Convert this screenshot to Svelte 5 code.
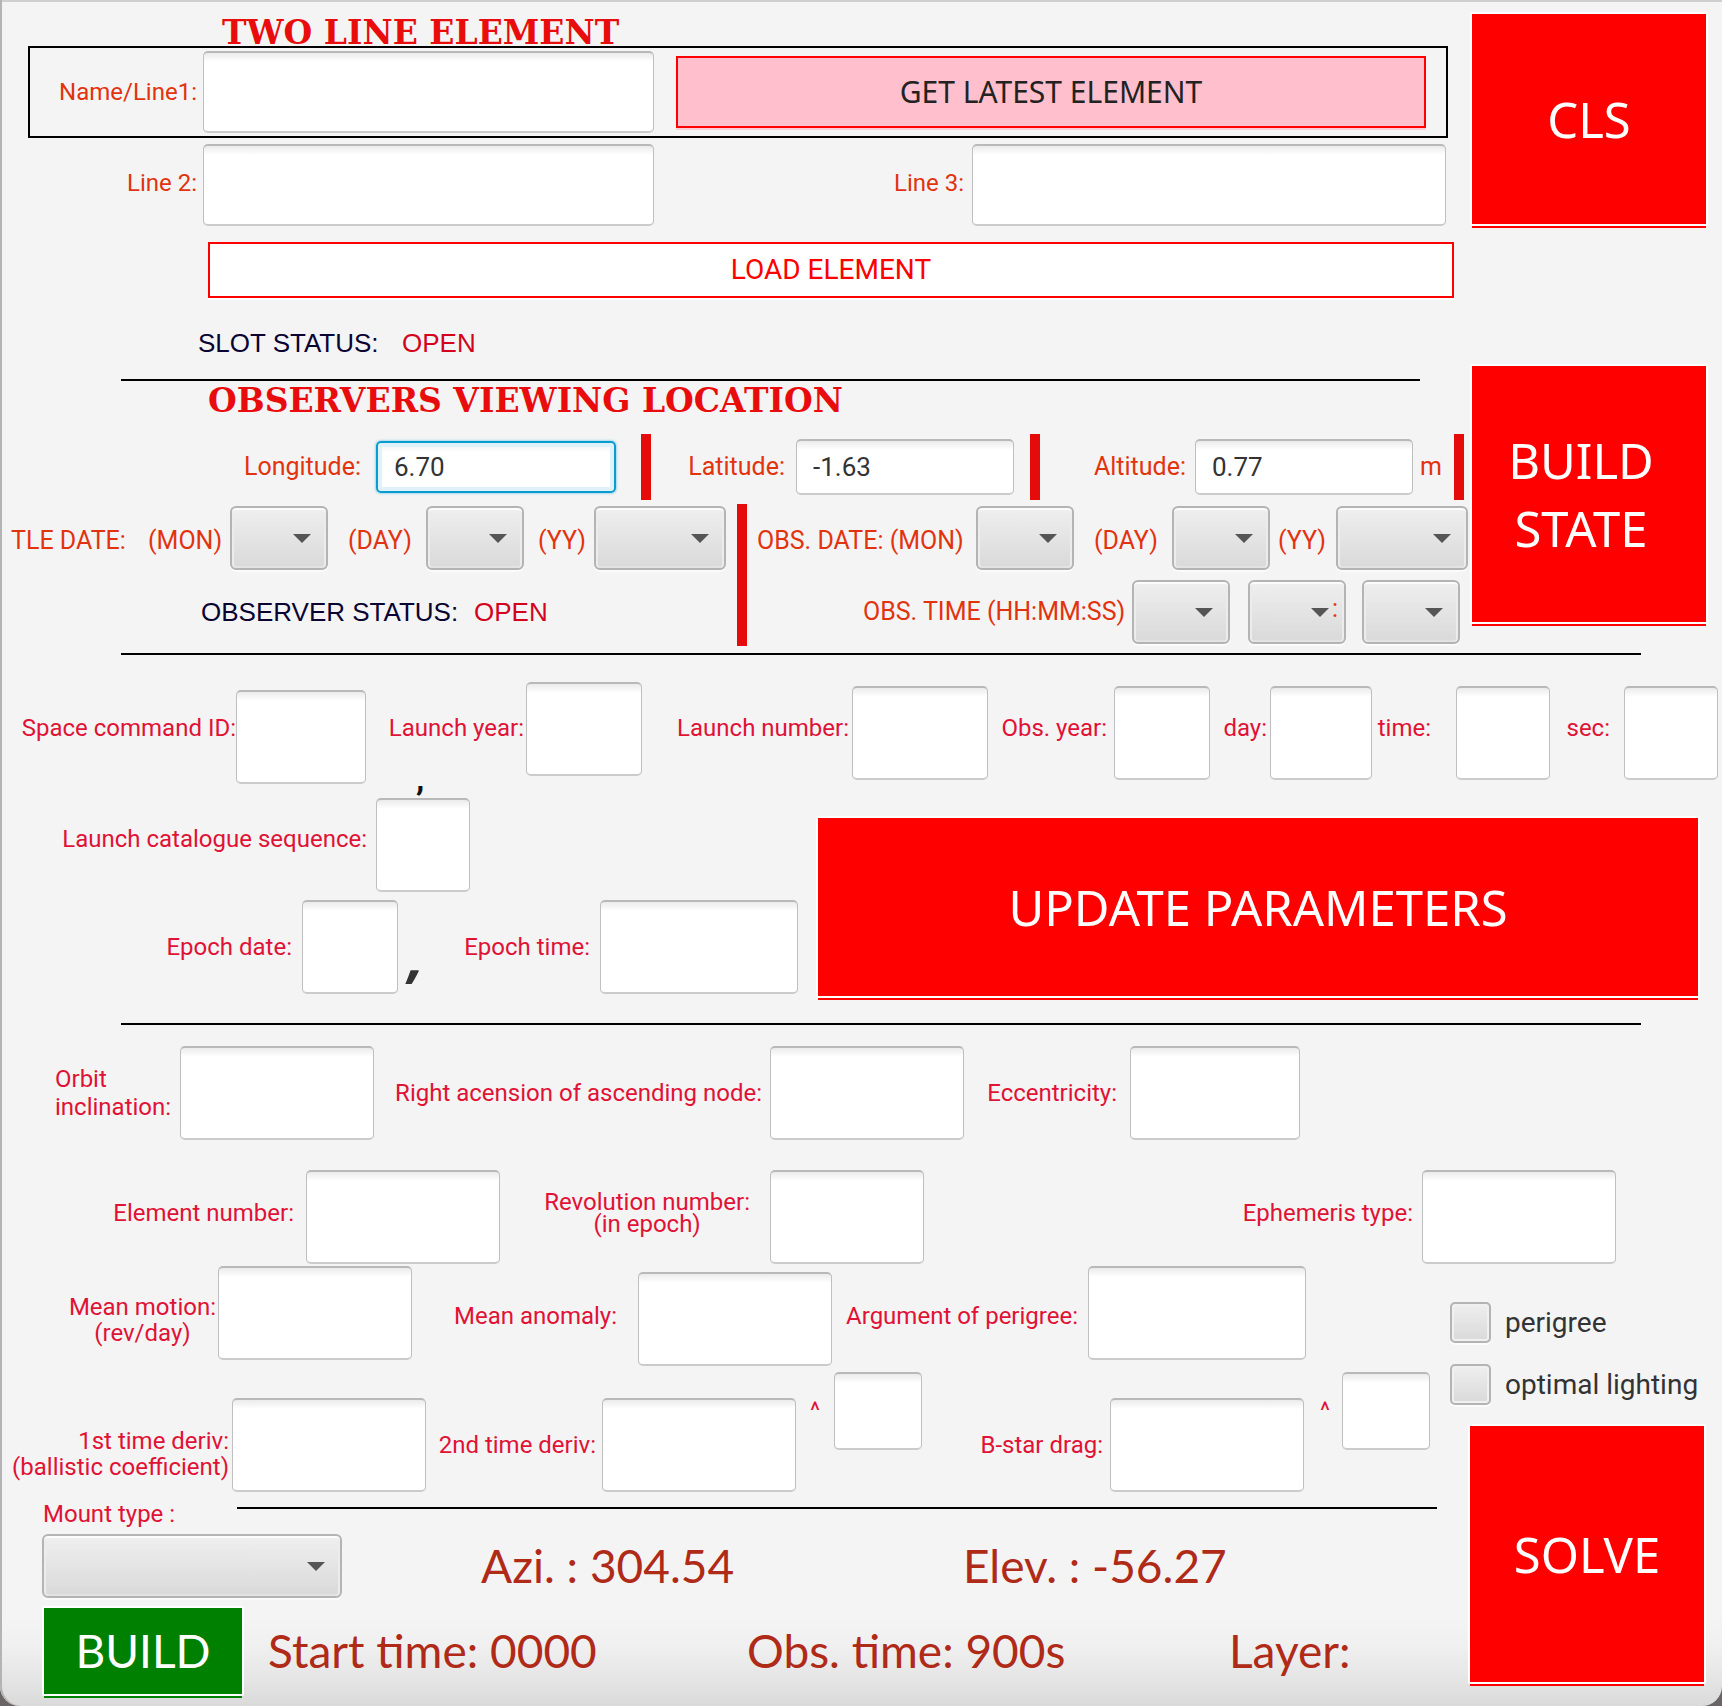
<script>
  let longitude = $state('6.70');
  let latitude = $state('-1.63');
  let altitude = $state('0.77');
</script>

{#snippet field(id, text, place = '')}
  <label class={place} for={id}>{text}</label>
  <input class={place} {id} type="text" />
{/snippet}

{#snippet combo(name)}
  <span class="combo"><select aria-label={name}><option></option></select></span>
{/snippet}

<main>
  <div class="top">
    <section class="entry">
      <h2 class="cells title-tle"><span>TWO LINE ELEMENT</span></h2>
      <div class="cells frame">
        <div class="cells panel">
          <label for="line1">Name/Line1:</label>
          <input id="line1" type="text" />
          <button class="latest" type="button">GET LATEST ELEMENT</button>
        </div>
      </div>
      <div class="cells lines">
        {@render field('line2', 'Line 2:')}
        {@render field('line3', 'Line 3:')}
      </div>
      <div class="cells load-row">
        <button class="load" type="button">LOAD ELEMENT</button>
      </div>
      <div class="cells status slot">
        <span>SLOT STATUS:</span>
        <span class="open">OPEN</span>
      </div>
      <div class="cells rule-short"><hr /></div>
      <h2 class="cells title-obs"><span>OBSERVERS VIEWING LOCATION</span></h2>

      <div class="cells location">
        <label for="lon">Longitude:</label>
        <input id="lon" class="focused" type="text" bind:value={longitude} />
        <i class="bar"></i>
        <label for="lat">Latitude:</label>
        <input id="lat" type="text" bind:value={latitude} />
        <i class="bar"></i>
        <label for="alt">Altitude:</label>
        <input id="alt" type="text" bind:value={altitude} />
        <span class="unit">m</span>
        <i class="bar"></i>
      </div>

      <div class="dates">
        <div class="stack">
          <div class="cells tle">
            <span class="tag">TLE DATE:</span>
            <span class="tag">(MON)</span>
            {@render combo('TLE month')}
            <span class="tag">(DAY)</span>
            {@render combo('TLE day')}
            <span class="tag">(YY)</span>
            {@render combo('TLE year')}
          </div>
          <div class="cells status observer">
            <span>OBSERVER STATUS:</span>
            <span class="open">OPEN</span>
          </div>
        </div>
        <i class="bar"></i>
        <div class="stack">
          <div class="cells obs">
            <span class="tag">OBS. DATE: (MON)</span>
            {@render combo('Observation month')}
            <span class="tag">(DAY)</span>
            {@render combo('Observation day')}
            <span class="tag">(YY)</span>
            {@render combo('Observation year')}
          </div>
          <div class="cells clock">
            <span>OBS. TIME (HH:MM:SS)</span>
            {@render combo('Observation hour')}
            <span class="combo"
              ><select aria-label="Observation minute"><option></option></select><span class="colon">:</span></span
            >
            {@render combo('Observation second')}
          </div>
        </div>
      </div>
    </section>

    <aside class="actions">
      <button class="big cls" type="button">CLS</button>
      <button class="big state" type="button">BUILD<br />STATE</button>
    </aside>
  </div>

  <div class="cells rule-long"><hr /></div>

  <section class="launch">
    <div class="cells ids">
      {@render field('scid', 'Space command ID:', 'low')}
      {@render field('lyear', 'Launch year:', 'high')}
      {@render field('lnum', 'Launch number:')}
      {@render field('oyear', 'Obs. year:')}
      {@render field('oday', 'day:')}
      {@render field('otime', 'time:')}
      {@render field('osec', 'sec:')}
    </div>
    <div class="cells comma-row"><b>,</b></div>
    <div class="update-row">
      <div class="stack tight">
        <div class="cells catalogue">
          {@render field('lseq', 'Launch catalogue sequence:')}
        </div>
        <div class="cells epoch">
          <label for="edate">Epoch date:</label>
          <input id="edate" type="text" />
          <em>,</em>
          <label for="etime">Epoch time:</label>
          <input id="etime" type="text" />
        </div>
      </div>
      <button class="big update" type="button">UPDATE PARAMETERS</button>
    </div>
  </section>

  <div class="cells rule-long"><hr /></div>

  <section class="orbit">
    <div class="cells orbit-a">
      <label class="start" for="incl">Orbit<br />inclination:</label>
      <input id="incl" type="text" />
      {@render field('raan', 'Right acension of ascending node:')}
      {@render field('ecc', 'Eccentricity:')}
    </div>
    <div class="cells orbit-b">
      {@render field('elnum', 'Element number:')}
      <label class="two" for="revs">Revolution number:<br />(in epoch)</label>
      <input id="revs" type="text" />
      {@render field('ephem', 'Ephemeris type:')}
    </div>
  </section>

  <div class="bottom">
    <section>
      <div class="cells motion">
        <label class="two wide" for="motion">Mean motion:<br />(rev/day)</label>
        <input id="motion" class="high" type="text" />
        {@render field('anomaly', 'Mean anomaly:', 'low')}
        {@render field('perigee', 'Argument of perigree:', 'high')}
      </div>
      <div class="cells derivs">
        <label class="wide" for="deriv1">1st time deriv:<br />(ballistic coefficient)</label>
        <input id="deriv1" type="text" />
        {@render field('deriv2', '2nd time deriv:')}
        {@render field('exp1', '^', 'power')}
        {@render field('bstar', 'B-star drag:')}
        {@render field('exp2', '^', 'power')}
      </div>
      <div class="cells mount-head">
        <label class="start" for="mount">Mount type :</label>
        <hr />
      </div>
      <div class="cells results">
        <span class="combo"><select id="mount"><option></option></select></span>
        <output>Azi. : 304.54</output>
        <output>Elev. : -56.27</output>
      </div>
      <div class="cells results second">
        <button class="big build" type="button">BUILD</button>
        <output>Start time: 0000</output>
        <output>Obs. time: 900s</output>
        <output>Layer:</output>
      </div>
    </section>
    <aside class="solve-col">
      <label class="check"><input type="checkbox" />perigree</label>
      <label class="check"><input type="checkbox" />optimal lighting</label>
      <button class="big solve" type="button">SOLVE</button>
    </aside>
  </div>
</main>

<style>
  :global(body) {
    margin: 0;
    background: #6b6464;
  }
  main {
    box-sizing: border-box;
    padding-bottom: 10px;
    border-radius: 0 0 20px 20px;
    background: linear-gradient(to top, #dadada, #e6e6e6 30px, #f0f0f0 60px, #f4f4f4 90px);
    box-shadow: inset 2px 0 #b4b4b4, inset 0 2px #cfcfcf;
    font: 24px/30px Roboto, 'Liberation Sans', sans-serif;
    overflow: hidden;
  }
  button,
  input,
  select {
    box-sizing: border-box;
    margin: 0;
    padding: 0;
    font: inherit;
  }
  hr {
    margin: 0;
    border: 0;
    height: 2px;
    background: #000;
  }
  h2 {
    margin: 0;
    font: bold 33px/26px 'DejaVu Serif', serif;
    color: #e80c0c;
  }

  /* Rows: odd tracks are gaps, even tracks hold the children in order. */
  .cells {
    display: grid;
    align-items: center;
  }
  .cells > :global(*) {
    grid-row: 1;
    min-width: 0;
    white-space: nowrap;
  }
  .cells > :global(:nth-child(1)) { grid-column: 2; }
  .cells > :global(:nth-child(2)) { grid-column: 4; }
  .cells > :global(:nth-child(3)) { grid-column: 6; }
  .cells > :global(:nth-child(4)) { grid-column: 8; }
  .cells > :global(:nth-child(5)) { grid-column: 10; }
  .cells > :global(:nth-child(6)) { grid-column: 12; }
  .cells > :global(:nth-child(7)) { grid-column: 14; }
  .cells > :global(:nth-child(8)) { grid-column: 16; }
  .cells > :global(:nth-child(9)) { grid-column: 18; }
  .cells > :global(:nth-child(10)) { grid-column: 20; }
  .cells > :global(:nth-child(11)) { grid-column: 22; }
  .cells > :global(:nth-child(12)) { grid-column: 24; }
  .cells > :global(:nth-child(13)) { grid-column: 26; }
  .cells > :global(:nth-child(14)) { grid-column: 28; }

  .cells > label {
    display: flex;
    justify-content: flex-end;
    align-items: center;
  }
  .cells > label.start {
    justify-content: flex-start;
  }

  input[type='text'] {
    width: 100%;
    height: 94px;
    padding: 0 16px;
    border: solid;
    border-width: 2px 1px;
    border-color: #b9b9b9 #bfbfbf #cbcbcb;
    border-radius: 5px;
    background: linear-gradient(#ebebeb, #fff 9px);
    color: #333;
    font-size: 26px;
    outline: none;
  }
  .combo {
    display: grid;
    align-items: center;
    height: 64px;
    border-radius: 6px;
    box-shadow: 0 2px #fbfbfb;
  }
  .combo > * {
    grid-area: 1 / 1;
  }
  .combo::after {
    content: '';
    grid-area: 1 / 1;
    justify-self: end;
    margin-right: 17px;
    border: solid transparent;
    border-width: 9px 9px 0;
    border-top-color: #555;
    pointer-events: none;
  }
  .combo select {
    appearance: none;
    width: 100%;
    height: 100%;
    border: 2px solid #b4b4b4;
    border-radius: 6px;
    background: linear-gradient(#efefef, #d9d9d9);
    box-shadow: inset 0 2px #fcfcfc, inset 2px 0 #ececec, inset -2px 0 #ececec, inset 0 -2px #e2e2e2;
  }
  .colon {
    justify-self: end;
    padding: 0 8px 6px 0;
    z-index: 1;
  }
  .bar {
    align-self: stretch;
    background: #e60b0b;
  }
  .stack {
    display: grid;
    align-content: start;
    gap: 10px;
  }
  .stack.tight {
    gap: 8px;
  }

  .big {
    border: 2px solid #fff;
    border-radius: 2px;
    background: #f00;
    box-shadow: 0 4px 0 -2px #f00;
    color: #fff;
    font: 49px/68px 'Noto Sans', sans-serif;
    text-align: center;
  }

  /* Element entry */
  .top {
    display: grid;
    grid-template-columns: 1470fr 238fr 14fr;
    color: #e2330f;
  }
  .entry {
    min-width: 0;
    padding: 20px 0 7px;
  }
  .entry input[type='text'] {
    height: 82px;
  }
  .title-tle {
    grid-template-columns: 222fr 1248fr;
  }
  .title-obs {
    grid-template-columns: 208fr 1262fr;
    padding: 7px 0 20px;
  }
  .frame {
    grid-template-columns: 28fr 1420fr 22fr;
  }
  .panel {
    grid-template-columns: 30fr 137fr 6fr 451fr 22fr 750fr 20fr;
    height: 88px;
    border: 2px solid #000;
  }
  .latest {
    height: 72px;
    border: 2px solid #f00;
    background: #ffbfcc;
    box-shadow: 0 2px #fbcdd6;
    color: #222;
    font: 30px/36px 'Noto Sans', sans-serif;
  }
  .lines {
    grid-template-columns: 60fr 137fr 6fr 451fr 236fr 74fr 8fr 474fr 24fr;
    margin-top: 6px;
  }
  .lines label {
    padding-bottom: 4px;
  }
  .load-row {
    grid-template-columns: 208fr 1246fr 16fr;
    margin-top: 16px;
  }
  .load {
    height: 56px;
    border: 2px solid #f00;
    background: #fff;
    box-shadow: 0 2px #fff;
    color: #f00;
    font-size: 28px;
  }
  .status {
    font-family: 'Liberation Sans', sans-serif;
    font-size: 26px;
    color: #0a0433;
  }
  .open {
    color: #d3041c;
  }
  .slot {
    grid-template-columns: 198fr 184fr 20fr 1068fr;
    padding: 30px 0 21px;
  }
  .rule-short {
    grid-template-columns: 121fr 1299fr 50fr;
  }
  .rule-long {
    grid-template-columns: 121fr 1520fr 81fr;
  }
  .location {
    grid-template-columns: 245fr 116fr 15fr 240fr 25fr 10fr 40fr 94fr 11fr 218fr 16fr 10fr 57fr 89fr 9fr 218fr 7fr 22fr 12fr 10fr 6fr;
    height: 66px;
    font-size: 25px;
  }
  .location input[type='text'] {
    height: 56px;
  }
  .location input.focused {
    height: 52px;
    border: 2px solid #0a9bd0;
    background: linear-gradient(#f0f0f0, #fff 9px);
    box-shadow: inset 0 0 0 4px #dff1f9, 0 0 2px 1px #a5d8eb;
  }
  .dates {
    display: grid;
    grid-template-columns: 737fr 10fr 723fr;
    margin-top: 4px;
    font-size: 25px;
  }
  .dates .stack {
    padding: 2px 0;
  }
  .tag {
    padding-top: 6px;
  }
  .tle {
    grid-template-columns: 11fr 118fr 19fr 73fr 9fr 98fr 20fr 64fr 14fr 98fr 14fr 46fr 10fr 132fr 11fr;
    height: 64px;
  }
  .observer {
    grid-template-columns: 201fr 260fr 13fr 263fr;
    height: 64px;
  }
  .obs {
    grid-template-columns: 10fr 210fr 9fr 98fr 20fr 64fr 14fr 98fr 8fr 46fr 12fr 132fr 2fr;
    height: 64px;
  }
  .clock {
    grid-template-columns: 116fr 260fr 9fr 98fr 18fr 98fr 16fr 98fr 10fr;
    height: 64px;
  }

  .actions {
    display: flex;
    flex-direction: column;
    gap: 138px;
    padding-top: 12px;
  }
  .cls {
    height: 214px;
  }
  .state {
    height: 260px;
    padding-right: 16px;
  }

  /* Launch data */
  .launch,
  .orbit,
  .bottom {
    color: #e01235;
  }
  .launch {
    padding: 27px 0 25px;
  }
  .ids {
    grid-template-columns: 17fr 219fr 0fr 130fr 19fr 139fr 2fr 116fr 30fr 177fr 3fr 136fr 11fr 108fr 7fr 96fr 11fr 46fr 3fr 102fr 7fr 52fr 25fr 94fr 17fr 43fr 14fr 94fr 4fr;
    height: 102px;
  }
  .ids label {
    padding-bottom: 10px;
  }
  input.low {
    align-self: end;
  }
  input.high {
    align-self: start;
  }
  .comma-row {
    grid-template-columns: 416fr 1306fr;
    grid-auto-rows: 14px;
    align-items: end;
    line-height: 40px;
    font-size: 34px;
    color: #111;
  }
  .update-row {
    display: grid;
    grid-template-columns: 816fr 884fr 22fr;
  }
  .catalogue {
    grid-template-columns: 55fr 312fr 9fr 94fr 346fr;
  }
  .catalogue label {
    padding-bottom: 12px;
  }
  .epoch {
    grid-template-columns: 163fr 129fr 10fr 96fr 10fr 12fr 43fr 127fr 10fr 198fr 18fr;
  }
  .epoch em {
    padding-top: 16px;
    font: italic bold 56px/48px 'Noto Sans', sans-serif;
    color: #333;
  }
  .update {
    height: 182px;
    margin-top: 18px;
  }

  /* Orbital elements */
  .orbit {
    display: grid;
    gap: 30px;
    padding-top: 21px;
  }
  .orbit-a {
    grid-template-columns: 55fr 118fr 7fr 194fr 17fr 371fr 8fr 194fr 21fr 132fr 13fr 170fr 422fr;
    line-height: 28px;
  }
  .orbit-b {
    grid-template-columns: 111fr 183fr 12fr 194fr 41fr 209fr 20fr 154fr 315fr 174fr 9fr 194fr 106fr;
    line-height: 22px;
  }
  .orbit-b label {
    padding-bottom: 8px;
  }
  .two {
    text-align: center;
  }

  .bottom {
    display: grid;
    grid-template-columns: 1450fr 256fr 16fr;
  }
  .bottom section {
    min-width: 0;
    padding-top: 2px;
  }
  .wide {
    line-height: 26px;
    text-align: right;
  }
  .wide.two {
    padding-top: 8px;
    text-align: center;
  }
  .motion {
    grid-template-columns: 69fr 147fr 2fr 194fr 41fr 164fr 21fr 194fr 11fr 235fr 10fr 218fr 144fr;
    height: 100px;
  }
  .derivs {
    grid-template-columns: 12fr 217fr 3fr 194fr 9fr 161fr 6fr 194fr 12fr 12fr 14fr 88fr 52fr 129fr 7fr 194fr 14fr 12fr 12fr 88fr 20fr;
    align-items: end;
    height: 120px;
    margin-top: 6px;
  }
  .derivs label {
    height: 94px;
  }
  .derivs .wide {
    align-items: flex-end;
    padding-bottom: 12px;
    height: auto;
  }
  .derivs .power {
    align-self: start;
    height: 78px;
  }
  .mount-head {
    grid-template-columns: 43fr 135fr 59fr 1200fr 13fr;
    align-items: start;
    margin-top: 15px;
    line-height: 14px;
  }
  .results {
    grid-template-columns: 42fr 300fr 139fr 267fr 215fr 270fr 217fr;
    margin-top: 13px;
    font: 46px/52px Lato, sans-serif;
    color: #b02a18;
  }
  .results.second {
    grid-template-columns: 42fr 202fr 24fr 324fr 155fr 325fr 157fr 120fr 101fr;
    margin-top: 8px;
  }
  .build {
    height: 90px;
    background: #008000;
    box-shadow: 0 4px 0 -2px #008000;
    font: 46px/52px Lato, sans-serif;
  }
  .solve-col {
    display: flex;
    flex-direction: column;
    padding-top: 38px;
  }
  .check {
    display: flex;
    align-items: center;
    gap: 14px;
    height: 41px;
    margin-bottom: 21px;
    font-size: 28px;
    color: #333;
    white-space: nowrap;
  }
  .check input {
    appearance: none;
    width: 41px;
    height: 41px;
    border: 2px solid #b4b4b4;
    border-radius: 5px;
    background: linear-gradient(#efefef, #d9d9d9);
    box-shadow: inset 0 0 0 2px #f0f0f0, 0 2px #fbfbfb;
  }
  .solve {
    height: 260px;
    margin: -2px 0 0 18px;
  }
</style>
